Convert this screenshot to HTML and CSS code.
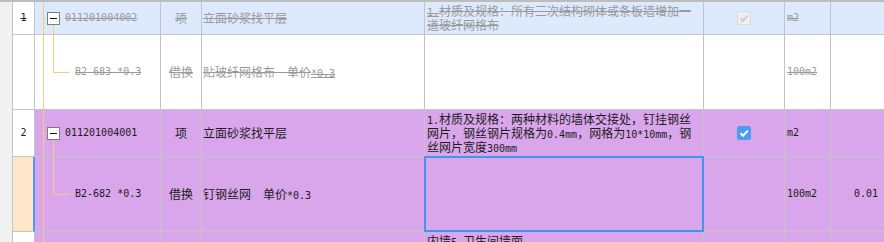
FILE: index.html
```html
<!DOCTYPE html>
<html lang="zh-CN">
<head>
<meta charset="utf-8">
<title>清单</title>
<link rel="stylesheet" href="styles.css">
</head>
<body>
<div class="page">
  <div class="strip"></div>
  <div class="grid">
    <!-- row 1 (deleted) -->
    <div class="c rn white strike"><span class="m">1</span></div>
    <div class="c tree parent blue del"><span class="box"><span class="minus"></span></span><span class="m code">011201004002</span></div>
    <div class="c type blue del"><span>项</span></div>
    <div class="c name blue del"><span>立面砂浆找平层</span></div>
    <div class="c desc blue del"><div class="txt"><span class="m">1.</span>材质及规格：所有三次结构砌体或条板墙增加一<br>道玻纤网格布</div></div>
    <div class="c chk blue"><span class="cb off"><svg viewBox="0 0 14 14" width="14" height="14"><polyline points="3.5,7.2 6,9.7 10.8,4.6" fill="none" stroke="#cfcfcf" stroke-width="2"/></svg></span></div>
    <div class="c unit blue del"><span class="m">m2</span></div>
    <div class="c qty blue"></div>

    <!-- row 1b (deleted child) -->
    <div class="c rn white"></div>
    <div class="c tree child white del"><span class="m">B2-683 *0.3</span></div>
    <div class="c type white del"><span>借换</span></div>
    <div class="c name white del"><span>贴玻纤网格布　单价<span class="m">*0.3</span></span></div>
    <div class="c desc white"></div>
    <div class="c chk white"></div>
    <div class="c unit white del"><span class="m">100m2</span></div>
    <div class="c qty white"></div>

    <!-- row 2 -->
    <div class="c rn white"><span class="m">2</span></div>
    <div class="c tree parent purple"><span class="box"><span class="minus"></span></span><span class="m code">011201004001</span></div>
    <div class="c type purple"><span>项</span></div>
    <div class="c name purple"><span>立面砂浆找平层</span></div>
    <div class="c desc purple"><div class="txt"><span class="m">1.</span>材质及规格：两种材料的墙体交接处，钉挂钢丝<br>网片，钢丝钢片规格为<span class="m">0.4mm</span>，网格为<span class="m">10*10mm</span>，钢<br>丝网片宽度<span class="m">300mm</span></div></div>
    <div class="c chk purple"><span class="cb on"><svg viewBox="0 0 14 14" width="14" height="14"><polyline points="3.5,7.2 6,9.7 10.8,4.6" fill="none" stroke="#ffffff" stroke-width="2"/></svg></span></div>
    <div class="c unit purple"><span class="m">m2</span></div>
    <div class="c qty purple"></div>

    <!-- row 2b (selected child) -->
    <div class="c rn peach current"></div>
    <div class="c tree child purple"><span class="m">B2-682 *0.3</span></div>
    <div class="c type purple"><span>借换</span></div>
    <div class="c name purple"><span>钉钢丝网　单价<span class="m">*0.3</span></span></div>
    <div class="c desc purple selected"></div>
    <div class="c chk purple"></div>
    <div class="c unit purple"><span class="m">100m2</span></div>
    <div class="c qty purple"><span class="m">0.01</span></div>

    <!-- row 3 (partial) -->
    <div class="c rn white"></div>
    <div class="c tree purple"></div>
    <div class="c type purple"></div>
    <div class="c name purple"></div>
    <div class="c desc purple"><div class="txt">内墙<span class="m">5.</span>卫生间墙面</div></div>
    <div class="c chk purple"></div>
    <div class="c unit purple"></div>
    <div class="c qty purple"></div>
  </div>
</div>
</body>
</html>
```
FILE: styles.css
```css
html, body {
  margin: 0;
  padding: 0;
  background: #ffffff;
}

body {
  width: 884px;
  height: 242px;
  overflow: hidden;
  font-family: "Noto Sans CJK SC", "Noto Sans", sans-serif;
  font-size: 12px;
  color: #1c1c1c;
}

.page {
  display: flex;
  border-top: 2px solid #bdbdbd;
  height: 240px;
  overflow: hidden;
}

.strip {
  flex: none;
  width: 12px;
  background: #f1f1f1;
  border-right: 1px solid #c4c4c4;
}

.grid {
  flex: none;
  display: grid;
  grid-template-columns: 22px 126px 41px 223px 279px 81px 46px 60px;
  grid-template-rows: 33px 75px 47px 75px 47px;
}

.c {
  box-sizing: border-box;
  border-right: 1px solid #c4c4c4;
  border-bottom: 1px solid #c4c4c4;
  display: flex;
  align-items: center;
  white-space: nowrap;
  line-height: 14px;
  overflow: hidden;
}

.m {
  font-family: "DejaVu Sans Mono", "Liberation Mono", monospace;
  font-size: 10px;
  line-height: 10px;
}

.white { background-color: #ffffff; }
.blue { background-color: #dde9fc; }
.purple { background-color: #d9a6eb; }
.peach { background-color: #ffe6c8; }

.del {
  color: #9a9a9a;
  text-decoration: line-through;
}

.del .m {
  text-decoration: line-through;
}

.strike {
  text-decoration: line-through;
  color: #222222;
}

.rn {
  justify-content: center;
}

.rn.current {
  border-right: 2px solid #4a9cf0;
}

/* tree column with orange connector lines */
.tree {
  --o: #fdc97c;
  background-image: linear-gradient(var(--o), var(--o));
  background-size: 1px 100%;
  background-position: 8px 0;
  background-repeat: no-repeat;
}

.tree.parent {
  padding-left: 12px;
  background-image:
    linear-gradient(var(--o), var(--o)),
    linear-gradient(var(--o), var(--o)),
    linear-gradient(var(--o), var(--o));
  background-size: 1px 100%, 1px 50%, 4px 1px;
  background-position: 8px 0, 18px 100%, 8px 50%;
  background-repeat: no-repeat;
}

.tree.child {
  padding-left: 40px;
  background-image:
    linear-gradient(var(--o), var(--o)),
    linear-gradient(var(--o), var(--o)),
    linear-gradient(var(--o), var(--o));
  background-size: 1px 100%, 1px 50%, 17px 1px;
  background-position: 8px 0, 18px 0, 18px 50%;
  background-repeat: no-repeat;
}

.box {
  box-sizing: border-box;
  width: 13px;
  height: 13px;
  border: 1px solid #7d7d7d;
  background: #ffffff;
  display: flex;
  align-items: center;
  justify-content: center;
  flex: none;
}

.minus {
  width: 7px;
  height: 1px;
  background: #111111;
}

.code {
  margin-left: 5px;
}

.type {
  justify-content: center;
}

.name {
  padding-left: 1px;
}

.desc {
  align-items: flex-start;
  padding: 2px 3px 0 2px;
}

.txt {
  line-height: 14px;
}

.selected {
  position: relative;
  overflow: visible;
}

.selected::after {
  content: "";
  position: absolute;
  top: -1px;
  left: -1px;
  right: -1px;
  bottom: -1px;
  border: 2px solid #3f97f2;
}

.chk {
  justify-content: center;
}

.cb {
  box-sizing: border-box;
  width: 14px;
  height: 14px;
  border-radius: 2px;
  display: flex;
}

.cb.on {
  background: #4a9df3;
}

.cb.off {
  background: #efefef;
  border: 1px solid #dadada;
}

.cb.off svg {
  margin: -1px;
}

.unit {
  padding-left: 2px;
}

.qty {
  justify-content: flex-end;
  padding-right: 12px;
}
```
